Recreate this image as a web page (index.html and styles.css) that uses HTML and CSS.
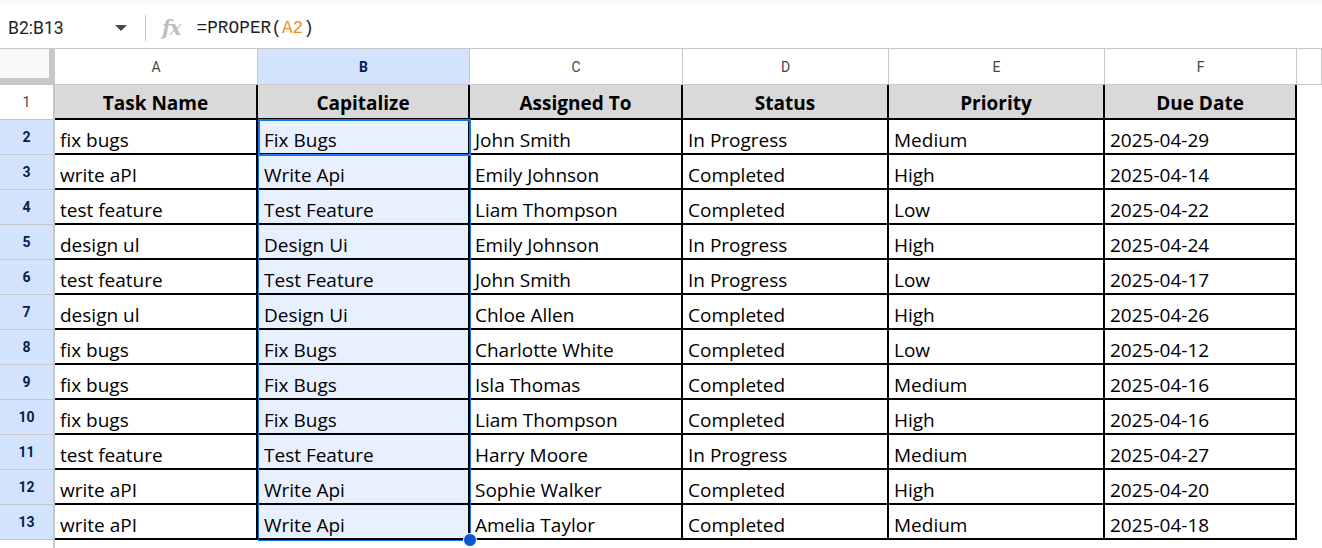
FILE: index.html
```html
<!DOCTYPE html>
<html lang="en">
<head>
  <meta charset="UTF-8">
  <title>Tasks - Sheet</title>
  <link rel="stylesheet" href="styles.css">
</head>
<body>
  <div class="top-strip"></div>

  <!-- Formula bar -->
  <div class="formula-bar">
    <div class="name-box">B2:B13</div>
    <span class="dropdown"></span>
    <span class="divider"></span>
    <span class="fx">fx</span>
    <div class="formula">=PROPER(<span class="ref">A2</span>)</div>
  </div>

  <div class="sheet">
    <div class="grid">
      <!-- column headers -->
      <div class="corner"></div>
      <div class="ch">A</div>
      <div class="ch sel">B</div>
      <div class="ch">C</div>
      <div class="ch">D</div>
      <div class="ch">E</div>
      <div class="ch">F</div>
      <div class="ch"></div>

      <!-- row 1 -->
      <div class="rh plain">1</div>
      <div class="th">Task Name</div>
      <div class="th">Capitalize</div>
      <div class="th">Assigned To</div>
      <div class="th">Status</div>
      <div class="th">Priority</div>
      <div class="th">Due Date</div>
      <div class="blank"></div>

      <div class="rh">2</div>
      <div class="td">fix bugs</div>
      <div class="td sel">Fix Bugs</div>
      <div class="td">John Smith</div>
      <div class="td">In Progress</div>
      <div class="td">Medium</div>
      <div class="td">2025-04-29</div>
      <div class="blank"></div>

      <div class="rh">3</div>
      <div class="td">write aPI</div>
      <div class="td sel">Write Api</div>
      <div class="td">Emily Johnson</div>
      <div class="td">Completed</div>
      <div class="td">High</div>
      <div class="td">2025-04-14</div>
      <div class="blank"></div>

      <div class="rh">4</div>
      <div class="td">test feature</div>
      <div class="td sel">Test Feature</div>
      <div class="td">Liam Thompson</div>
      <div class="td">Completed</div>
      <div class="td">Low</div>
      <div class="td">2025-04-22</div>
      <div class="blank"></div>

      <div class="rh">5</div>
      <div class="td">design ul</div>
      <div class="td sel">Design Ui</div>
      <div class="td">Emily Johnson</div>
      <div class="td">In Progress</div>
      <div class="td">High</div>
      <div class="td">2025-04-24</div>
      <div class="blank"></div>

      <div class="rh">6</div>
      <div class="td">test feature</div>
      <div class="td sel">Test Feature</div>
      <div class="td">John Smith</div>
      <div class="td">In Progress</div>
      <div class="td">Low</div>
      <div class="td">2025-04-17</div>
      <div class="blank"></div>

      <div class="rh">7</div>
      <div class="td">design ul</div>
      <div class="td sel">Design Ui</div>
      <div class="td">Chloe Allen</div>
      <div class="td">Completed</div>
      <div class="td">High</div>
      <div class="td">2025-04-26</div>
      <div class="blank"></div>

      <div class="rh">8</div>
      <div class="td">fix bugs</div>
      <div class="td sel">Fix Bugs</div>
      <div class="td">Charlotte White</div>
      <div class="td">Completed</div>
      <div class="td">Low</div>
      <div class="td">2025-04-12</div>
      <div class="blank"></div>

      <div class="rh">9</div>
      <div class="td">fix bugs</div>
      <div class="td sel">Fix Bugs</div>
      <div class="td">Isla Thomas</div>
      <div class="td">Completed</div>
      <div class="td">Medium</div>
      <div class="td">2025-04-16</div>
      <div class="blank"></div>

      <div class="rh">10</div>
      <div class="td">fix bugs</div>
      <div class="td sel">Fix Bugs</div>
      <div class="td">Liam Thompson</div>
      <div class="td">Completed</div>
      <div class="td">High</div>
      <div class="td">2025-04-16</div>
      <div class="blank"></div>

      <div class="rh">11</div>
      <div class="td">test feature</div>
      <div class="td sel">Test Feature</div>
      <div class="td">Harry Moore</div>
      <div class="td">In Progress</div>
      <div class="td">Medium</div>
      <div class="td">2025-04-27</div>
      <div class="blank"></div>

      <div class="rh">12</div>
      <div class="td">write aPI</div>
      <div class="td sel">Write Api</div>
      <div class="td">Sophie Walker</div>
      <div class="td">Completed</div>
      <div class="td">High</div>
      <div class="td">2025-04-20</div>
      <div class="blank"></div>

      <div class="rh">13</div>
      <div class="td">write aPI</div>
      <div class="td sel">Write Api</div>
      <div class="td">Amelia Taylor</div>
      <div class="td">Completed</div>
      <div class="td">Medium</div>
      <div class="td">2025-04-18</div>
      <div class="blank"></div>

      <div class="rh empty"></div>
    </div>

    <!-- selection overlay -->
    <div class="range"></div>
    <div class="active-cell"></div>
    <div class="fill-handle"></div>
  </div>
</body>
</html>
```

FILE: styles.css
```css
* {
  margin: 0;
  padding: 0;
  box-sizing: border-box;
}

body {
  width: 1322px;
  height: 548px;
  overflow: hidden;
  background: #fff;
  font-family: "Roboto", "Liberation Sans", sans-serif;
}

.top-strip {
  height: 6px;
  background: #f9fbfd;
}

/* Formula bar */
.formula-bar {
  height: 43px;
  display: flex;
  align-items: center;
  padding-top: 2px;
  border-bottom: 1px solid #c7c7c7;
}

.name-box {
  width: 108px;
  padding-left: 8px;
  font-size: 17.5px;
  color: #1f1f1f;
}

.dropdown {
  width: 0;
  height: 0;
  border-left: 6px solid transparent;
  border-right: 6px solid transparent;
  border-top: 6px solid #444746;
  margin-left: 7px;
}

.divider {
  width: 1px;
  height: 26px;
  background: #c7c7c7;
  margin-left: 18px;
}

.fx {
  margin-left: 16px;
  font-family: "DejaVu Serif", serif;
  font-style: italic;
  font-weight: bold;
  font-size: 20px;
  color: #bdbdbd;
  letter-spacing: -1px;
}

.formula {
  margin-left: 16px;
  font-family: "Liberation Mono", monospace;
  font-size: 17.8px;
  color: #1f1f1f;
}

.formula .ref {
  color: #e8912d;
}

/* Sheet grid */
.sheet {
  position: relative;
}

.grid {
  display: grid;
  grid-template-columns: 55px 203px 212px 213px 206px 216px 192px 1fr;
  grid-template-rows: 36px repeat(13, 35px) 20px;
}

.corner {
  background: #f8f9fa;
  border-right: 6px solid #c7c7c7;
  border-bottom: 7px solid #c7c7c7;
}

.ch {
  display: flex;
  align-items: center;
  justify-content: center;
  border-right: 1px solid #c7c7c7;
  border-bottom: 1px solid #c7c7c7;
  font-size: 14px;
  color: #444746;
}

.ch.sel {
  background: #d3e3fd;
  font-weight: bold;
  color: #041e49;
}

.rh {
  display: flex;
  align-items: center;
  justify-content: center;
  background: #d3e3fd;
  border-right: 2px solid #c7c7c7;
  border-bottom: 1px solid #c7c7c7;
  font-size: 14px;
  font-weight: bold;
  color: #041e49;
}

.rh.plain {
  background: #fff;
  font-weight: normal;
  color: #444746;
}

.rh.empty {
  background: #fff;
  border-bottom: none;
}

.th,
.td {
  display: flex;
  border-right: 2px solid #000;
  border-bottom: 2px solid #000;
  font-family: "Open Sans", sans-serif;
  font-size: 19px;
  color: #000;
  white-space: nowrap;
}

.th {
  align-items: center;
  justify-content: center;
  background: #d9d9d9;
  font-weight: bold;
  padding-top: 2px;
}

.td {
  align-items: flex-end;
  padding: 0 0 0 5px;
}

.td.sel {
  background: #e8f0fe;
  padding-left: 6px;
}

/* Selection overlay */
.range {
  position: absolute;
  left: 258px;
  top: 70px;
  width: 213px;
  height: 422px;
  border: 1px solid #1a73e8;
}

.active-cell {
  position: absolute;
  left: 258px;
  top: 70px;
  width: 213px;
  height: 37px;
  border: 2px solid #1a73e8;
}

.fill-handle {
  position: absolute;
  left: 463px;
  top: 484px;
  width: 14px;
  height: 14px;
  border-radius: 50%;
  background: #0b57d0;
  border: 1px solid #fff;
}
```
